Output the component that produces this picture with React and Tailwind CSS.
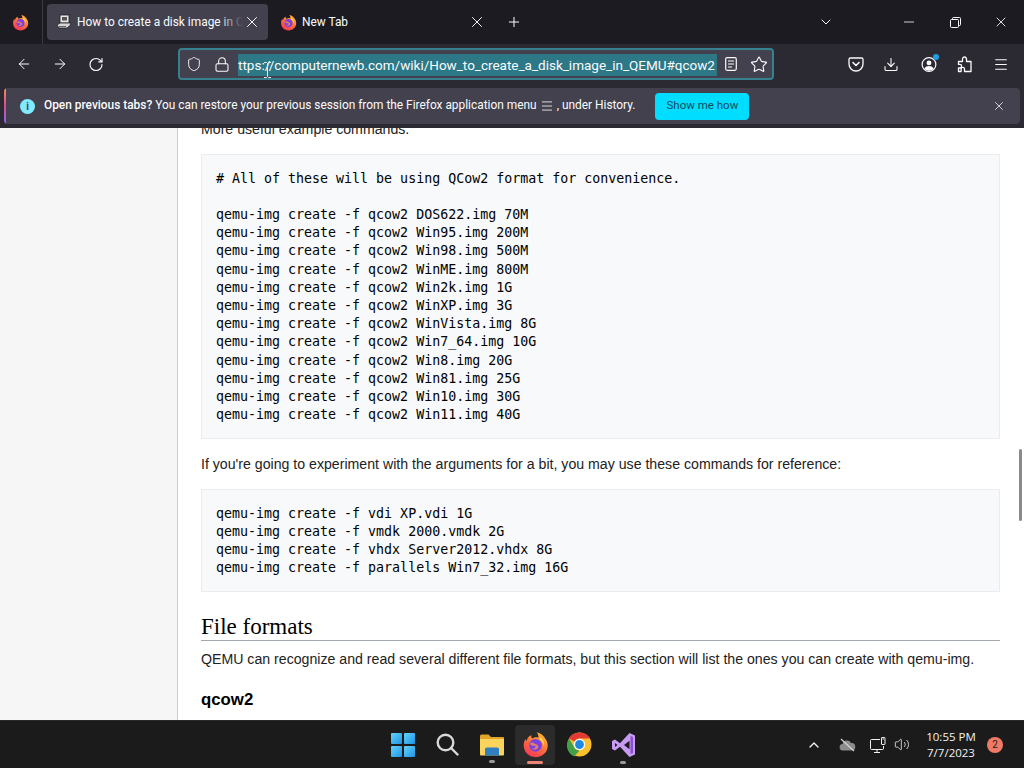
import React from "react";
import { ArrowLeft, ArrowRight, RotateCw, Shield, Lock, Star, Download, Menu, X, Plus, ChevronDown, Minus, ChevronUp, Volume2 } from "lucide-react";

const UI = { fontFamily: 'Roboto, "Noto Sans", sans-serif' };

function Firefox({ size = 20 }) {
  return (
    <svg width={size} height={size} viewBox="0 0 32 32">
      <defs>
        <linearGradient id={`ff${size}`} x1="0.8" y1="0" x2="0.2" y2="1">
          <stop offset="0" stopColor="#ffbd2e" />
          <stop offset="0.5" stopColor="#ff7139" />
          <stop offset="1" stopColor="#f5325b" />
        </linearGradient>
      </defs>
      <path d="M16 31C7.7 31 2 24.8 2 17c0-3 .8-5.6 2.3-7.6.2 1 .6 1.8 1.2 2.4C6 8.5 8 6 11 5c-.3 2 .3 3.2 1.4 4 2-1.6 5-2 7-1 .2-2.200-.3-4.400-2-6.500 5 1 8.600 4.500 10.500 8 1.700 2.300 2.600 5.200 2.600 8C30.500 25 24.300 31 16 31z" fill={`url(#ff${size})`} />
      <circle cx="16" cy="17" r="7.500" fill="#7b3fe4" />
      <path d="M9 15c2-2 5-1.500 6 0 3 .5 5 2.500 4 5-1.500 2.500-5.500 2.500-7.500 1C15 21 17 19 15.500 17.500 13 18 11 17 9 15z" fill="#ff9640" opacity="0.75" />
      <path d="M21 7c3.500 2 6 6 5 11-.8-3.500-2.500-6-5-7.500z" fill="#ffdd55" />
    </svg>
  );
}

function Chrome() {
  return (
    <svg width="25" height="25" viewBox="0 0 48 48">
      <circle cx="24" cy="24" r="23" fill="#fbc02d" />
      <path d="M24 1a23 23 0 0 1 19.900 11.500H24a11.500 11.500 0 0 0-10 5.800L4.100 12.500A23 23 0 0 1 24 1z" fill="#e53935" />
      <path d="M4.100 12.500 14 29.800a11.500 11.500 0 0 0 10 5.700L14 47A23 23 0 0 1 4.100 12.500z" fill="#43a047" />
      <circle cx="24" cy="24" r="11" fill="#fff" />
      <circle cx="24" cy="24" r="8.500" fill="#1e88e5" />
    </svg>
  );
}

function VisualStudio() {
  return (
    <svg width="25" height="26" viewBox="0 0 25 26">
      <path d="M1 9l3-1.500 5 3.800L18.500 1 24 3.500v19L18.500 25 9 14.700 4 18.500 1 17z" fill="#c79bf2" />
      <path d="M4 11v4l2.500-2zM13 13l5.500 4.200V8.800z" fill="#1c1c1c" />
      <path d="M19.500 4v18L22 21V5z" fill="#8a4fd3" />
    </svg>
  );
}

function Folder() {
  return (
    <svg width="26" height="24" viewBox="0 0 26 24">
      <path d="M1 3a1.500 1.500 0 0 1 1.500-1.500h7L12 4h12a1 1 0 0 1 1 1v4H1z" fill="#e0a526" />
      <path d="M1 6h24v15.500a1 1 0 0 1-1 1H2a1 1 0 0 1-1-1z" fill="#fbd45c" />
      <path d="M6 22.500V16a1.500 1.500 0 0 1 1.500-1.500h11A1.500 1.500 0 0 1 20 16v6.500z" fill="#2f7fc1" />
    </svg>
  );
}

function Pocket() {
  return (
    <svg width="16" height="16" viewBox="0 0 16 16" fill="none" stroke="#fbfbfe" strokeWidth="1.300">
      <path d="M2.500 2h11A1.500 1.500 0 0 1 15 3.500V8A7 7 0 0 1 1 8V3.500A1.500 1.500 0 0 1 2.500 2z" />
      <path d="M5 6.500l3 3 3-3" strokeLinecap="round" strokeLinejoin="round" strokeWidth="1.600" />
    </svg>
  );
}

function Profile() {
  return (
    <svg width="17" height="17" viewBox="0 0 17 17" fill="none">
      <circle cx="8.500" cy="8.500" r="7.300" stroke="#fbfbfe" strokeWidth="1.300" />
      <circle cx="8.500" cy="6.800" r="2.600" fill="#fbfbfe" />
      <path d="M3.500 13c1-2.300 3-3 5-3s4 .7 5 3a7 7 0 0 1-10 0z" fill="#fbfbfe" />
    </svg>
  );
}

function Puzzle() {
  return (
    <svg width="16" height="17" viewBox="0 0 16 17" fill="none" stroke="#fbfbfe" strokeWidth="1.300" strokeLinejoin="round">
      <path d="M1.500 5.500h4V3a2 2 0 0 1 3.500-1.300c.5.500.6 1 .5 1.800v2h4.500v10H7.500v-2.500a1.700 1.700 0 1 0-3.400 0v2.500H1.500v-3.500h1.300a1.800 1.800 0 0 0 0-3.600H1.500z" />
    </svg>
  );
}

function Reader() {
  return (
    <svg width="12" height="14" viewBox="0 0 12 14" fill="none" stroke="#fbfbfe" strokeWidth="1.200">
      <rect x="0.700" y="0.700" width="10.600" height="12.600" rx="1.500" />
      <path d="M3 4h6M3 7h6M3 10h4" />
    </svg>
  );
}

function Restore() {
  return (
    <svg width="11" height="11" viewBox="0 0 11 11" fill="none" stroke="#fbfbfe" strokeWidth="1">
      <rect x="0.500" y="2.500" width="8" height="8" rx="1" />
      <path d="M2.500 2.500V1.500a1 1 0 0 1 1-1h6a1 1 0 0 1 1 1v6a1 1 0 0 1-1 1h-1" />
    </svg>
  );
}

function DiskTabIcon() {
  return (
    <svg width="16" height="16" viewBox="0 0 16 16">
      <rect x="4" y="1" width="9" height="8" fill="#e6e6e6" stroke="#222" strokeWidth="0.800" />
      <rect x="6" y="3" width="5" height="3.500" fill="#555" />
      <path d="M1 11l3-2h11l-1 2.500-3 2.500H3z" fill="#d5d5d5" stroke="#222" strokeWidth="0.800" />
      <rect x="3" y="12" width="7" height="1" fill="#666" />
    </svg>
  );
}

function Win() {
  const cell = "rounded-[1px] bg-gradient-to-br from-[#62d2fb] to-[#1a94e6]";
  return (
    <div className="grid h-6 w-6 grid-cols-2 gap-[2px]">
      <div className={cell} />
      <div className={cell} />
      <div className={cell} />
      <div className={cell} />
    </div>
  );
}

function Search() {
  return (
    <svg width="23" height="23" viewBox="0 0 23 23" fill="none" stroke="#d9d9d9" strokeWidth="2.400">
      <circle cx="9.500" cy="9.500" r="7.800" />
      <path d="M15 15l6.500 6.500" strokeLinecap="round" />
    </svg>
  );
}

function Cloud() {
  return (
    <svg width="17" height="14" viewBox="0 0 17 14">
      <path d="M4 12.500a3.200 3.200 0 0 1-.4-6.400A4.500 4.500 0 0 1 12 5a3.700 3.700 0 0 1 1 7.500z" fill="#8b8b8b" />
      <path d="M2 1l13 12" stroke="#d5d5d5" strokeWidth="1.200" />
    </svg>
  );
}

function Network() {
  return (
    <svg width="16" height="16" viewBox="0 0 16 16" fill="none" stroke="#f2f2f2" strokeWidth="1">
      <path d="M10 2.500H1.500a1 1 0 0 0-1 1v8a1 1 0 0 0 1 1h11a1 1 0 0 0 1-1V9" />
      <path d="M7 12.500v2.500M4 15.500h6" />
      <rect x="11.500" y="0.500" width="3.500" height="7" rx="0.500" />
      <path d="M12.500 2h1.500" />
    </svg>
  );
}

function IBeam() {
  return (
    <svg width="9" height="16" viewBox="0 0 9 16" fill="none" stroke="#e8e8e8" strokeWidth="1">
      <path d="M1 .5h2.500l1 1 1-1H8M4.500 1.500v13M1 15.500h2.500l1-1 1 1H8" />
    </svg>
  );
}

const Close = ({ s = 18 }) => <X size={s} strokeWidth={1.300} color="#fbfbfe" />;

const block1 = `# All of these will be using QCow2 format for convenience.

qemu-img create -f qcow2 DOS622.img 70M
qemu-img create -f qcow2 Win95.img 200M
qemu-img create -f qcow2 Win98.img 500M
qemu-img create -f qcow2 WinME.img 800M
qemu-img create -f qcow2 Win2k.img 1G
qemu-img create -f qcow2 WinXP.img 3G
qemu-img create -f qcow2 WinVista.img 8G
qemu-img create -f qcow2 Win7_64.img 10G
qemu-img create -f qcow2 Win8.img 20G
qemu-img create -f qcow2 Win81.img 25G
qemu-img create -f qcow2 Win10.img 30G
qemu-img create -f qcow2 Win11.img 40G`;

const block2 = `qemu-img create -f vdi XP.vdi 1G
qemu-img create -f vmdk 2000.vmdk 2G
qemu-img create -f vhdx Server2012.vhdx 8G
qemu-img create -f parallels Win7_32.img 16G`;

function Code({ children }) {
  return (
    <pre
      className="border border-[#eaecf0] bg-[#f8f9fa] px-[14px] pb-[13.500px] pt-[14.500px] text-[13.300px] leading-[18.200px] text-black"
      style={{ fontFamily: '"DejaVu Sans Mono", monospace' }}
    >
      {children}
    </pre>
  );
}

export default function App() {
  return (
    <div className="relative flex h-[768px] w-[1024px] flex-col overflow-hidden bg-white" style={UI}>
      {/* Tab strip */}
      <div className="flex h-[44px] shrink-0 items-center bg-[#1c1b22] text-[#fbfbfe]">
        <div className="flex h-full w-[43px] items-center justify-center border-r border-[#3a3944] pr-[2px]">
          <Firefox size={17} />
        </div>
        <div className="ml-1 flex h-[36px] w-[221px] items-center rounded bg-[#42414d] pl-[9px] pr-[7px]">
          <DiskTabIcon />
          <div className="relative ml-[5px] w-[166px] overflow-hidden whitespace-nowrap pt-[1px] text-[11.900px]">
            How to create a disk image in QEMU
            <div className="absolute inset-y-0 right-0 w-6 bg-gradient-to-r from-transparent to-[#42414d]" />
          </div>
          <div className="ml-auto"><Close /></div>
        </div>
        <div className="ml-[12px] flex h-[36px] w-[206px] items-center">
          <Firefox size={17} />
          <span className="ml-[5px] pt-[1px] text-[11.900px]">New Tab</span>
          <div className="ml-auto"><Close /></div>
        </div>
        <div className="ml-[20px] flex w-[16px] justify-center"><Plus size={20} strokeWidth={1.500} /></div>
        <div className="ml-[296px] flex w-[16px] justify-center"><ChevronDown size={22} strokeWidth={1.500} /></div>
        <div className="ml-[67px] flex w-[16px] justify-center"><Minus size={16} strokeWidth={1.200} /></div>
        <div className="ml-[30px] flex w-[16px] justify-center"><Restore /></div>
        <div className="ml-[30px] flex w-[16px] justify-center"><Close s={22} /></div>
      </div>

      {/* Toolbar + notification */}
      <div className="flex h-[84px] shrink-0 flex-col bg-[#2b2a33] text-[#fbfbfe]">
        <div className="flex h-[40px] shrink-0 items-center">
          <div className="ml-[16px] flex w-[16px] justify-center"><ArrowLeft size={24} strokeWidth={1.500} /></div>
          <div className="ml-[20px] flex w-[16px] justify-center"><ArrowRight size={24} strokeWidth={1.500} /></div>
          <div className="ml-[20px] flex w-[16px] justify-center"><RotateCw size={19} strokeWidth={1.700} /></div>
          <div className="ml-[74px] flex h-[32px] w-[596px] items-center rounded border-2 border-[#37808f] bg-[#42414d]">
            <div className="ml-[6px] flex w-[16px] justify-center"><Shield size={20} strokeWidth={1.400} /></div>
            <div className="ml-[12px] flex w-[16px] justify-center"><Lock size={17} strokeWidth={1.600} /></div>
            <div className="ml-[8px] mt-[2px] flex h-[22px] w-[479px] shrink-0 items-center overflow-hidden whitespace-nowrap bg-[#2c7886] text-[13.500px]">
              ttps://computernewb.com/wiki/How_to_create_a_disk_image_in_QEMU#qcow2
            </div>
            <div className="ml-[6px] flex w-[16px] justify-center"><Reader /></div>
            <div className="ml-[11px] flex w-[18px] justify-center"><Star size={19} strokeWidth={1.500} /></div>
          </div>
          <div className="ml-[74px] flex w-[16px] justify-center"><Pocket /></div>
          <div className="ml-[19px] flex w-[16px] justify-center"><Download size={19} strokeWidth={1.600} /></div>
          <div className="relative ml-[22px] flex w-[16px] justify-center">
            <Profile />
            <div className="absolute -right-[2px] -top-[2px] h-[6px] w-[6px] rounded-full bg-[#1f9ee0]" />
          </div>
          <div className="ml-[20px] flex w-[16px] justify-center"><Puzzle /></div>
          <div className="ml-[20px] flex w-[16px] justify-center"><Menu size={19} strokeWidth={1.600} /></div>
        </div>
        <div className="mx-[4px] mt-[4px] flex h-[36px] shrink-0 items-center overflow-hidden rounded bg-[#42414d]">
          <div className="h-full w-[2px] shrink-0 bg-gradient-to-b from-[#ff8a50] via-[#d9488f] to-[#9059ff]" />
          <div className="ml-[14px] flex h-[15px] w-[15px] shrink-0 items-center justify-center rounded-full bg-[#80ebff] text-[10px] font-bold text-[#42414d]">i</div>
          <div className="ml-[9px] shrink-0 whitespace-nowrap text-[11.900px]">
            <span className="font-medium">Open previous tabs?</span> You can restore your previous session from the Firefox application menu
          </div>
          <div className="mx-[3px] flex w-[14px] shrink-0 justify-center"><Menu size={18} strokeWidth={1.400} /></div>
          <div className="shrink-0 whitespace-nowrap text-[11.900px]">, under History.</div>
          <div className="ml-[20px] flex h-[27px] w-[94px] shrink-0 items-center justify-center rounded bg-[#00ddff] text-[11.500px] text-[#0e4a5c]">Show me how</div>
          <div className="ml-[243px] flex w-[14px] shrink-0 justify-center"><Close s={16} /></div>
        </div>
      </div>

      {/* Page */}
      <div className="flex h-[592px] shrink-0 overflow-hidden bg-white" style={{ fontFamily: '"Liberation Sans", sans-serif' }}>
        <div className="w-[177px] shrink-0 bg-[#f6f6f6]" />
        <div className="w-[847px] border-l border-[#a7d7f9] bg-white pl-[23px] pr-[24px]">
          <p className="-mt-[10px] text-[14.150px] leading-[22px] text-[#222]">More useful example commands.</p>
          <div className="mt-[14px]"><Code>{block1}</Code></div>
          <p className="my-[14.200px] text-[14.150px] leading-[22px] text-[#222]">
            If you&apos;re going to experiment with the arguments for a bit, you may use these commands for reference:
          </p>
          <Code>{block2}</Code>
          <h2 className="mt-[19px] border-b border-[#a2a9b1] pt-[3px] text-[23px] leading-[26px] text-black" style={{ fontFamily: '"Liberation Serif", serif' }}>File formats</h2>
          <p className="mt-[7px] text-[14.150px] leading-[22px] text-[#222]">
            QEMU can recognize and read several different file formats, but this section will list the ones you can create with qemu-img.
          </p>
          <h3 className="mt-[18px] text-[16.800px] font-bold leading-[24px] text-black">qcow2</h3>
        </div>
      </div>

      {/* Taskbar */}
      <div className="flex h-[48px] shrink-0 items-center border-t border-[#2a2a2a] bg-[#1b1b1b] text-[#f2f2f2]">
        <div className="ml-[391px] flex w-[24px] justify-center"><Win /></div>
        <div className="ml-[20px] flex w-[24px] justify-center"><Search /></div>
        <div className="relative ml-[20px] flex w-[26px] justify-center">
          <Folder />
          <div className="absolute -bottom-[6px] left-[10px] h-[3px] w-[6px] rounded-full bg-[#9a9a9a]" />
        </div>
        <div className="relative ml-[10px] flex h-[40px] w-[40px] items-center justify-center rounded bg-[#2b2b2b]">
          <Firefox size={27} />
          <div className="absolute bottom-[1px] left-[12px] h-[3px] w-[16px] rounded-full bg-[#ee8378]" />
        </div>
        <div className="ml-[12px] flex w-[25px] justify-center"><Chrome /></div>
        <div className="relative ml-[19px] flex w-[25px] justify-center">
          <VisualStudio />
          <div className="absolute -bottom-[6px] left-[9px] h-[3px] w-[6px] rounded-full bg-[#9a9a9a]" />
        </div>
        <div className="ml-[170px] flex w-[16px] justify-center"><ChevronUp size={22} strokeWidth={2} /></div>
        <div className="ml-[17px] flex w-[17px] justify-center"><Cloud /></div>
        <div className="ml-[14px] flex w-[16px] justify-center"><Network /></div>
        <div className="ml-[8px] flex w-[16px] justify-center"><Volume2 size={19} strokeWidth={1.200} /></div>
        <div className="ml-[11px] w-[60px] text-center text-[11.500px] leading-[16px]" style={{ fontFamily: '"Open Sans", sans-serif' }}>
          <div>10:55 PM</div>
          <div>7/7/2023</div>
        </div>
        <div className="ml-[6px] flex h-[16px] w-[16px] items-center justify-center rounded-full bg-[#ef7b66] text-[10px] text-[#1b1b1b]">2</div>
      </div>

      {/* Overlays: page scrollbar and text cursor */}
      <div className="absolute left-[1019px] top-[449px] h-[72px] w-[3px] rounded bg-[#8a8a8a]" />
      <div className="absolute left-[263px] top-[62px]"><IBeam /></div>
    </div>
  );
}
